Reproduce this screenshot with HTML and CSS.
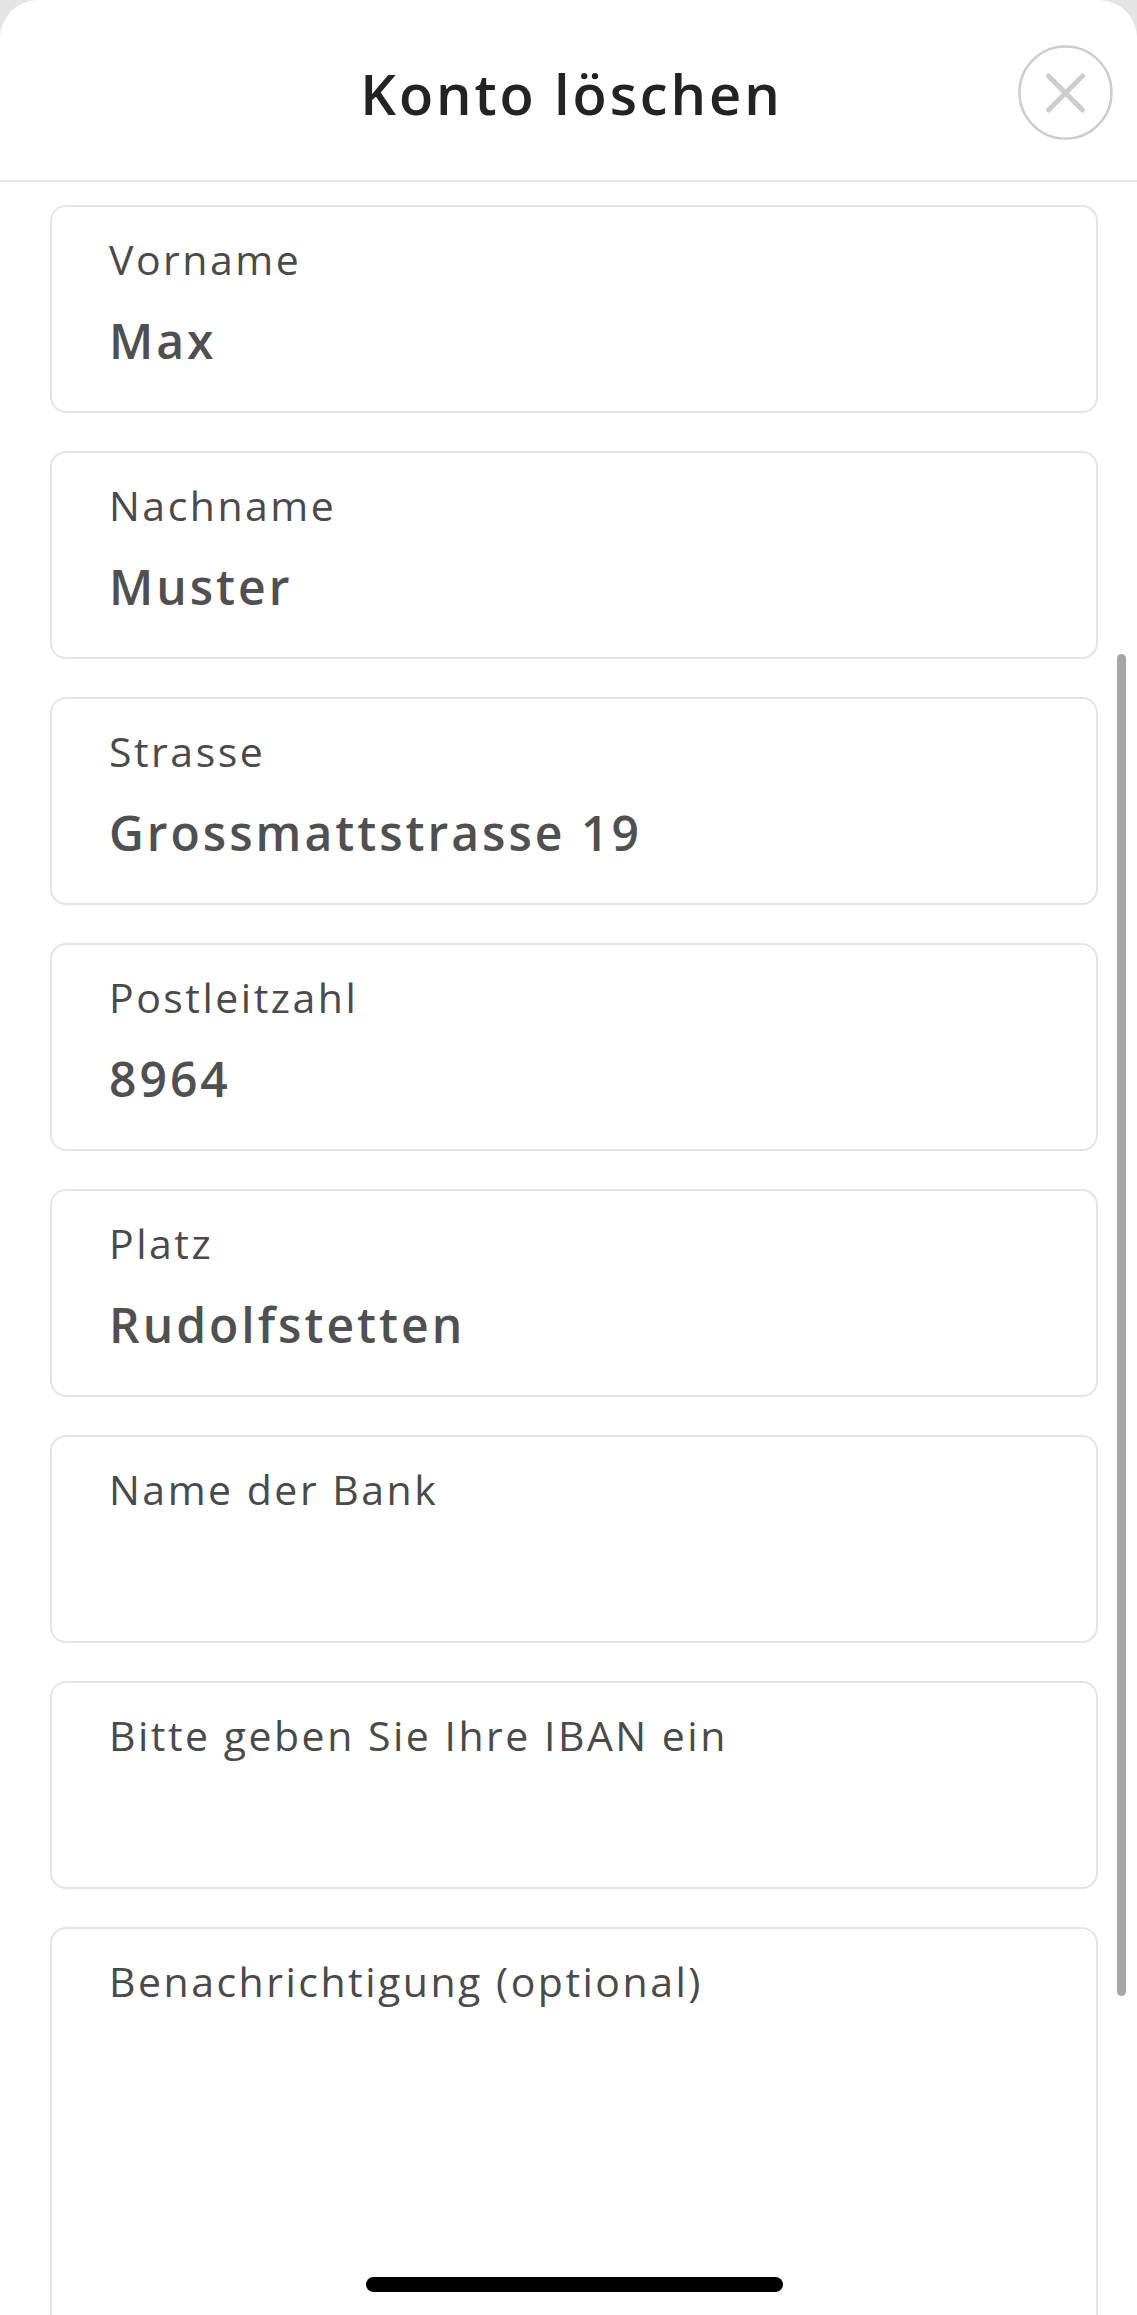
FILE: index.html
```html
<!DOCTYPE html>
<html lang="de">
<head>
<meta charset="utf-8">
<title>Konto löschen</title>
<link rel="stylesheet" href="styles.css">
</head>
<body>
<div class="sheet">
  <header class="header">
    <h1 class="title">Konto löschen</h1>
    <button class="close" aria-label="Schliessen">
      <svg width="95" height="95" viewBox="0 0 95 95">
        <circle cx="47.5" cy="47.5" r="46" fill="none" stroke="#cbcdd0" stroke-width="2.5"/>
        <path d="M30.5 31 L64.5 65 M64.5 31 L30.5 65" stroke="#cbcdd0" stroke-width="5" stroke-linecap="round" fill="none"/>
      </svg>
    </button>
  </header>
  <main class="form">
    <div class="field"><div class="label">Vorname</div><div class="value">Max</div></div>
    <div class="field"><div class="label">Nachname</div><div class="value">Muster</div></div>
    <div class="field"><div class="label">Strasse</div><div class="value">Grossmattstrasse 19</div></div>
    <div class="field"><div class="label">Postleitzahl</div><div class="value">8964</div></div>
    <div class="field"><div class="label">Platz</div><div class="value">Rudolfstetten</div></div>
    <div class="field"><div class="label">Name der Bank</div><div class="value"></div></div>
    <div class="field"><div class="label">Bitte geben Sie Ihre IBAN ein</div><div class="value"></div></div>
    <div class="field field-tall"><div class="label">Benachrichtigung (optional)</div></div>
  </main>
  <div class="scrollbar"></div>
  <div class="home-indicator"></div>
</div>
</body>
</html>
```
FILE: styles.css
```css
html, body {
  margin: 0;
  padding: 0;
  height: 100%;
  overflow: hidden;
  background: #e4e4e4;
}
body {
  font-family: "Open Sans", "DejaVu Sans", sans-serif;
}
.sheet {
  position: relative;
  width: 1137px;
  height: 2315px;
  background: #ffffff;
  border-radius: 38px 38px 0 0;
  overflow: hidden;
}
.header {
  position: relative;
  height: 180px;
  border-bottom: 2px solid #e8e8e8;
  display: flex;
  align-items: center;
  justify-content: center;
}
.title {
  margin: 0;
  font-size: 56px;
  font-weight: 600;
  color: #232323;
  line-height: 64px;
  padding: 6px 0 0 6px;
  letter-spacing: 2.9px;
}
.close {
  position: absolute;
  left: 1018px;
  top: 45px;
  width: 95px;
  height: 95px;
  padding: 0;
  border: 0;
  background: none;
}
.close svg { display: block; }
.form {
  padding: 23px 39px 0 50px;
  display: flex;
  flex-direction: column;
  gap: 38px;
}
.field {
  box-sizing: border-box;
  height: 208px;
  border: 2px solid #e4e4e4;
  border-radius: 16px;
  padding: 27px 0 0 57px;
}
.field-tall {
  height: 600px;
}
.label {
  font-size: 41px;
  line-height: 50px;
  color: #4a4a4a;
  letter-spacing: 2.5px;
}
.value {
  margin-top: 29px;
  font-size: 48px;
  line-height: 56px;
  font-weight: 600;
  color: #505050;
  letter-spacing: 3px;
  min-height: 56px;
}
.scrollbar {
  position: absolute;
  left: 1117px;
  top: 654px;
  width: 9px;
  height: 1342px;
  border-radius: 5px;
  background: #a6a6a6;
}
.home-indicator {
  position: absolute;
  left: 366px;
  top: 2277px;
  width: 417px;
  height: 15px;
  border-radius: 8px;
  background: #000000;
}
```
